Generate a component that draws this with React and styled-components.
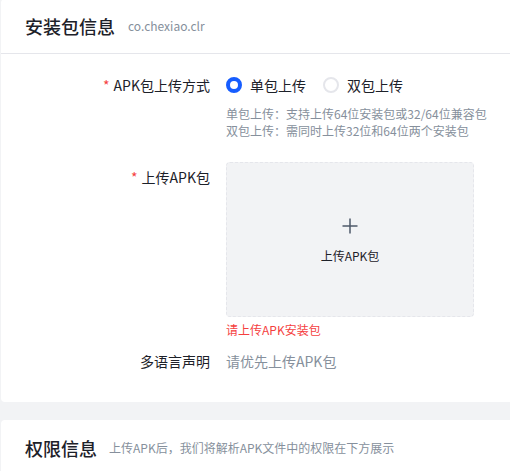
import React, { useState } from "react";
import styled, { createGlobalStyle } from "styled-components";

const GlobalStyle = createGlobalStyle`
  html, body {
    margin: 0;
    padding: 0;
    background: #f2f3f5;
    overflow: hidden;
    font-family: "Noto Sans CJK SC", "Noto Sans", sans-serif;
    color: #1d2129;
  }
`;

const Page = styled.div`
  display: flex;
  flex-direction: column;
  gap: 18px;
  padding-left: 1px;
  margin-top: -1px;
`;

const Card = styled.section`
  background: #fff;
  border-radius: 4px 0 0 4px;
`;

const CardHeader = styled.div`
  display: flex;
  align-items: center;
  height: 55px;
  padding: 0 24px;
  box-sizing: border-box;
  border-bottom: ${(p) => (p.$divider ? "1px solid #e5e6eb" : "none")};
`;

const CardTitle = styled.h2`
  margin: 0;
  font-size: 18px;
  font-weight: 500;
  line-height: 26px;
  color: #1d2129;
`;

const CardSub = styled.span`
  margin-left: ${(p) => p.$gap || 12}px;
  font-size: 12px;
  color: #86909c;
  line-height: 20px;
`;

const Form = styled.div`
  padding: 15px 0 25px;
`;

const Row = styled.div`
  display: grid;
  grid-template-columns: 209px 1fr;
  column-gap: 16px;
  margin-bottom: ${(p) => p.$mb || 0}px;
`;

const Label = styled.div`
  text-align: right;
  font-size: 14px;
  line-height: 32px;
  color: #1d2129;
  white-space: nowrap;
`;

const Star = styled.span`
  color: #f53f3f;
  margin-right: 4px;
`;

const Control = styled.div`
  display: flex;
  flex-direction: column;
  align-items: flex-start;
`;

const RadioGroup = styled.div`
  display: flex;
  align-items: center;
  height: 32px;
  gap: 17px;
`;

const RadioItem = styled.label`
  display: flex;
  align-items: center;
  gap: 8px;
  font-size: 14px;
  color: #1d2129;
  cursor: pointer;
`;

const RadioMark = styled.span`
  width: 16px;
  height: 16px;
  border-radius: 50%;
  box-sizing: border-box;
  border: ${(p) => (p.$checked ? "4.5px solid #165dff" : "2px solid #e5e6eb")};
  background: #fff;
`;

const Help = styled.div`
  margin-top: 4px;
  font-size: 12px;
  line-height: 17px;
  color: #86909c;
`;

const UploadBox = styled.div`
  width: 248px;
  height: 155px;
  box-sizing: border-box;
  border: 1px dashed #e5e6eb;
  border-radius: 4px;
  background: #f2f3f5;
  display: flex;
  flex-direction: column;
  align-items: center;
  justify-content: center;
  gap: 12px;
  padding-top: 4px;
  cursor: pointer;
  margin-top: 1px;
`;

const UploadText = styled.span`
  font-size: 12px;
  line-height: 20px;
  color: #1d2129;
`;

const ErrorText = styled.div`
  margin-top: 3px;
  font-size: 12px;
  line-height: 20px;
  color: #f53f3f;
`;

const Placeholder = styled.div`
  font-size: 14px;
  line-height: 32px;
  color: #86909c;
`;

function Radio({ checked, label, onClick }) {
  return (
    <RadioItem onClick={onClick}>
      <RadioMark $checked={checked} />
      {label}
    </RadioItem>
  );
}

function PlusIcon() {
  return (
    <svg width="16" height="16" viewBox="0 0 16 16" fill="none">
      <path d="M8 0.5v15M0.5 8h15" stroke="#4e5969" strokeWidth="1.5" />
    </svg>
  );
}

export default function App() {
  const [mode, setMode] = useState("single");

  return (
    <>
      <GlobalStyle />
      <Page>
        <Card>
          <CardHeader $divider>
            <CardTitle>安装包信息</CardTitle>
            <CardSub $gap={13}>co.chexiao.clr</CardSub>
          </CardHeader>
          <Form>
            <Row $mb={22}>
              <Label>
                <Star>*</Star>APK包上传方式
              </Label>
              <Control>
                <RadioGroup>
                  <Radio
                    checked={mode === "single"}
                    label="单包上传"
                    onClick={() => setMode("single")}
                  />
                  <Radio
                    checked={mode === "double"}
                    label="双包上传"
                    onClick={() => setMode("double")}
                  />
                </RadioGroup>
                <Help>
                  单包上传：支持上传64位安装包或32/64位兼容包
                  <br />
                  双包上传：需同时上传32位和64位两个安装包
                </Help>
              </Control>
            </Row>
            <Row $mb={5}>
              <Label>
                <Star>*</Star>上传APK包
              </Label>
              <Control>
                <UploadBox>
                  <PlusIcon />
                  <UploadText>上传APK包</UploadText>
                </UploadBox>
                <ErrorText>请上传APK安装包</ErrorText>
              </Control>
            </Row>
            <Row>
              <Label>多语言声明</Label>
              <Placeholder>请优先上传APK包</Placeholder>
            </Row>
          </Form>
        </Card>
        <Card>
          <CardHeader>
            <CardTitle>权限信息</CardTitle>
            <CardSub>上传APK后，我们将解析APK文件中的权限在下方展示</CardSub>
          </CardHeader>
        </Card>
      </Page>
    </>
  );
}
